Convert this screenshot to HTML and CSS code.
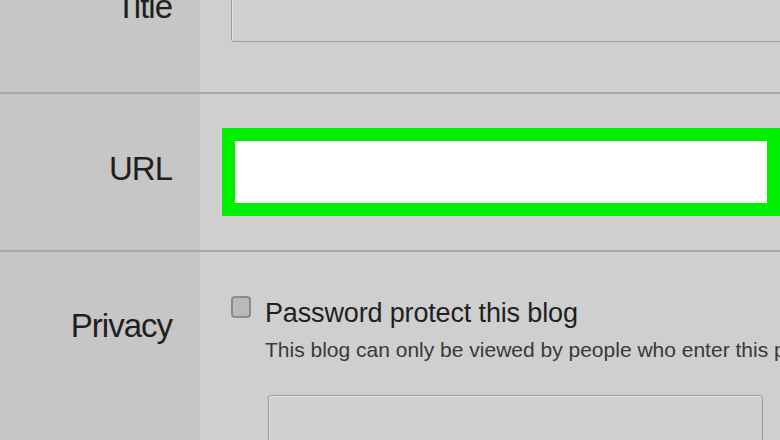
FILE: index.html
```html
<!DOCTYPE html>
<html lang="en">
<head>
    <meta charset="UTF-8">
    <meta name="viewport" content="width=device-width, initial-scale=1.0">
    <title>Blog settings</title>
    <link rel="stylesheet" href="styles.css">
</head>
<body>

    <div class="settings">
        <!-- 제목 -->
        <div class="row row-title">
            <label class="label" for="blogTitle">Title</label>
            <div class="field">
                <input type="text" id="blogTitle" class="text-input title-input">
            </div>
        </div>

        <!-- URL (강조 표시) -->
        <div class="row row-url">
            <label class="label" for="blogUrl">URL</label>
            <div class="field">
                <input type="text" id="blogUrl" class="url-input">
            </div>
        </div>

        <!-- 공개 설정 -->
        <div class="row row-privacy">
            <div class="label">Privacy</div>
            <div class="field">
                <label class="check-line">
                    <input type="checkbox" class="check">
                    <span>Password protect this blog</span>
                </label>
                <p class="hint">This blog can only be viewed by people who enter this password.</p>
                <input type="password" class="text-input pass-input">
            </div>
        </div>
    </div>

</body>
</html>
```

FILE: styles.css
```css
/* 기본 스타일링 */
body {
    margin: 0;
    padding: 0;
    font-family: "Liberation Sans", Arial, sans-serif;
    background-color: #cfcfcf;
    color: #1f1f1f;
    overflow: hidden;
}

.settings {
    margin-top: -40px;
}

.row {
    display: flex;
    border-bottom: 2px solid #a9a9a9;
}

.label {
    width: 172px;
    flex: none;
    padding-right: 28px;
    background-color: #c6c6c6;
    text-align: right;
    font-size: 33px;
    letter-spacing: -1px;
    line-height: 40px;
}

.field {
    flex: 1;
    min-width: 0;
    overflow: hidden;
}

.text-input {
    display: block;
    box-sizing: border-box;
    border: 1px solid #9c9c9c;
    border-radius: 3px;
    background-color: #d1d1d1;
    box-shadow: inset 1px 1px 0 #e2e2e2;
    outline: none;
}

/* 제목 */
.row-title {
    height: 132px;
}

.row-title .label {
    padding-top: 27px;
}

.title-input {
    margin: 20px 0 0 31px;
    width: 600px;
    height: 62px;
}

/* URL */
.row-url {
    height: 156px;
}

.row-url .label {
    padding-top: 55px;
}

.url-input {
    display: block;
    box-sizing: border-box;
    margin: 34px 0 0 22px;
    width: 558px;
    height: 88px;
    border: 13px solid #00ef00;
    background-color: #fff;
    outline: none;
}

/* 공개 설정 */
.row-privacy {
    height: 200px;
    border-bottom: none;
}

.row-privacy .label {
    padding-top: 54px;
}

.check-line {
    display: flex;
    align-items: flex-start;
    margin: 44px 0 0 31px;
    font-size: 27px;
    letter-spacing: -0.15px;
    line-height: 30px;
}

.check {
    appearance: none;
    box-sizing: border-box;
    width: 20px;
    height: 22px;
    margin: 0 14px 0 0;
    border: 2px solid #8c8c8c;
    border-radius: 4px;
    background-color: #b9b9b9;
}

.check-line span {
    margin-top: 2px;
}

.hint {
    margin: 10px 0 0 65px;
    white-space: nowrap;
    font-size: 21px;
    line-height: 24px;
    color: #393939;
}

.pass-input {
    margin: 33px 0 0 68px;
    width: 495px;
    height: 80px;
}
```
